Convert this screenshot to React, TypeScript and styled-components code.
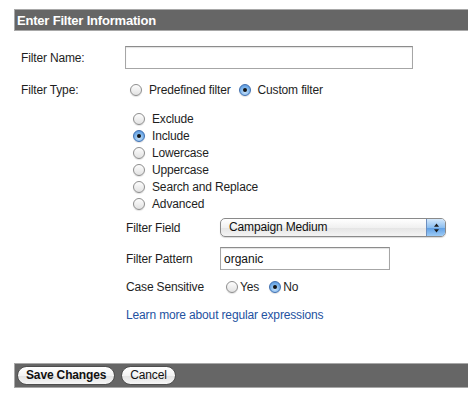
import styled, { createGlobalStyle } from "styled-components";

const GlobalStyle = createGlobalStyle`
  body {
    margin: 0;
    background: #fff;
    font-family: "Liberation Sans", Arial, Helvetica, sans-serif;
    font-size: 12px;
    letter-spacing: -0.15px;
    color: #1e1e1e;
  }
`;

const Page = styled.div`
  padding: 9px 0 0 14px;
`;

const Bar = styled.div<{ $h: number }>`
  box-sizing: border-box;
  display: flex;
  align-items: center;
  gap: 6px;
  height: ${(p) => p.$h}px;
  padding-left: 2px;
  background: #666;
  border: 1px solid #a8a8a8;
  border-right: none;
`;

const Title = styled.span`
  color: #fff;
  font-weight: bold;
  font-size: 13px;
  letter-spacing: -0.2px;
`;

const Form = styled.div`
  display: flex;
  flex-direction: column;
  padding-left: 7px;
`;

const Row = styled.div<{ $top: number; $label: number; $indent?: number; $h: number }>`
  display: grid;
  grid-template-columns: ${(p) => p.$label}px auto;
  align-items: center;
  height: ${(p) => p.$h}px;
  margin-top: ${(p) => p.$top}px;
  margin-left: ${(p) => p.$indent ?? 0}px;
`;

const Label = styled.span`
  white-space: nowrap;
`;

const TextBox = styled.input<{ $w: number }>`
  box-sizing: border-box;
  width: ${(p) => p.$w}px;
  height: 23px;
  margin: 0;
  padding: 0 3px;
  border: 1px solid #a6a6a6;
  border-top-color: #8c8c8c;
  box-shadow: inset 0 1px 1px rgba(0, 0, 0, 0.12);
  font: inherit;
  color: #111;
  outline: none;
`;

const Choices = styled.div<{ $pad: number; $gap: number }>`
  display: flex;
  align-items: center;
  gap: ${(p) => p.$gap}px;
  padding-left: ${(p) => p.$pad}px;
`;

const Choice = styled.label<{ $gap: number }>`
  display: inline-flex;
  align-items: center;
  gap: ${(p) => p.$gap}px;
  white-space: nowrap;
`;

const Radio = styled.input.attrs({ type: "radio" })`
  appearance: none;
  box-sizing: border-box;
  width: 12px;
  height: 12px;
  margin: 0;
  border-radius: 50%;
  border: 1px solid #8d8d8d;
  background: linear-gradient(#fdfdfd, #e2e2e2);
  box-shadow: 0 1px 1px rgba(0, 0, 0, 0.12);
  display: grid;
  place-items: center;

  &:checked {
    border-color: #3f6fb0;
    background: radial-gradient(circle at 50% 70%, #c8e2fb 0%, #7ab2ea 55%, #4a8ad6 100%);
  }
  &:checked::after {
    content: "";
    width: 4px;
    height: 4px;
    border-radius: 50%;
    background: #141414;
  }
`;

const ActionList = styled.div`
  display: flex;
  flex-direction: column;
  margin: 12px 0 0 112px;
`;

const ActionItem = styled(Choice)`
  height: 17px;
`;

const PopUp = styled.div`
  box-sizing: border-box;
  display: flex;
  align-items: stretch;
  width: 226px;
  height: 19px;
  border: 1px solid #8a8a8a;
  border-radius: 5px;
  overflow: hidden;
  background: linear-gradient(#ffffff, #f1f1f1 50%, #e4e4e4 51%, #f4f4f4);
  box-shadow: 0 1px 1px rgba(0, 0, 0, 0.15);
`;

const PopUpText = styled.span`
  flex: 1;
  padding-left: 8px;
  line-height: 17px;
  color: #111;
`;

const PopUpArrows = styled.span`
  width: 18px;
  display: grid;
  place-items: center;
  border-left: 1px solid #6d8fbf;
  background: linear-gradient(#d4e8fb, #8dbff0 50%, #5d9de3 51%, #9ccbf6);
`;

const Link = styled.a`
  margin: 12px 0 0 105px;
  line-height: 16px;
  color: #24529f;
  text-decoration: none;
`;

const Footer = styled(Bar)`
  margin-top: 40px;
`;

const Button = styled.button<{ $bold?: boolean }>`
  box-sizing: border-box;
  height: 19px;
  margin: 0;
  padding: 0 8px;
  border: 1px solid #4e4e4e;
  border-radius: 10px;
  background: linear-gradient(#ffffff, #f3f3f3 50%, #e2e2e2 51%, #f6f6f6);
  font: inherit;
  font-weight: ${(p) => (p.$bold ? "bold" : "normal")};
  letter-spacing: -0.15px;
  color: #111;
  line-height: 17px;
`;

const actions = ["Exclude", "Include", "Lowercase", "Uppercase", "Search and Replace", "Advanced"];

export default function App() {
  return (
    <Page>
      <GlobalStyle />
      <Bar $h={22}>
        <Title>Enter Filter Information</Title>
      </Bar>
      <Form>
        <Row $top={15} $label={104} $h={23}>
          <Label>Filter Name:</Label>
          <TextBox $w={288} defaultValue="" />
        </Row>
        <Row $top={13} $label={104} $h={16}>
          <Label>Filter Type:</Label>
          <Choices $pad={5} $gap={8}>
            <Choice $gap={7}>
              <Radio name="ftype" />
              Predefined filter
            </Choice>
            <Choice $gap={7}>
              <Radio name="ftype" defaultChecked />
              Custom filter
            </Choice>
          </Choices>
        </Row>
        <ActionList>
          {actions.map((a) => (
            <ActionItem key={a} $gap={7}>
              <Radio name="action" defaultChecked={a === "Include"} />
              {a}
            </ActionItem>
          ))}
        </ActionList>
        <Row $top={6} $label={94} $indent={105} $h={19}>
          <Label>Filter Field</Label>
          <PopUp>
            <PopUpText>Campaign Medium</PopUpText>
            <PopUpArrows>
              <svg width="7" height="10" viewBox="0 0 7 10">
                <path d="M3.5 0.5 L6 3.8 L1 3.8 Z" fill="#1a1a1a" />
                <path d="M3.5 9.5 L6 6.2 L1 6.2 Z" fill="#1a1a1a" />
              </svg>
            </PopUpArrows>
          </PopUp>
        </Row>
        <Row $top={10} $label={94} $indent={105} $h={23}>
          <Label>Filter Pattern</Label>
          <TextBox $w={170} defaultValue="organic" />
        </Row>
        <Row $top={9} $label={94} $indent={105} $h={16}>
          <Label>Case Sensitive</Label>
          <Choices $pad={6} $gap={10}>
            <Choice $gap={2}>
              <Radio name="case" />
              Yes
            </Choice>
            <Choice $gap={2}>
              <Radio name="case" defaultChecked />
              No
            </Choice>
          </Choices>
        </Row>
        <Link href="#">Learn more about regular expressions</Link>
      </Form>
      <Footer $h={25}>
        <Button $bold>Save Changes</Button>
        <Button>Cancel</Button>
      </Footer>
    </Page>
  );
}
